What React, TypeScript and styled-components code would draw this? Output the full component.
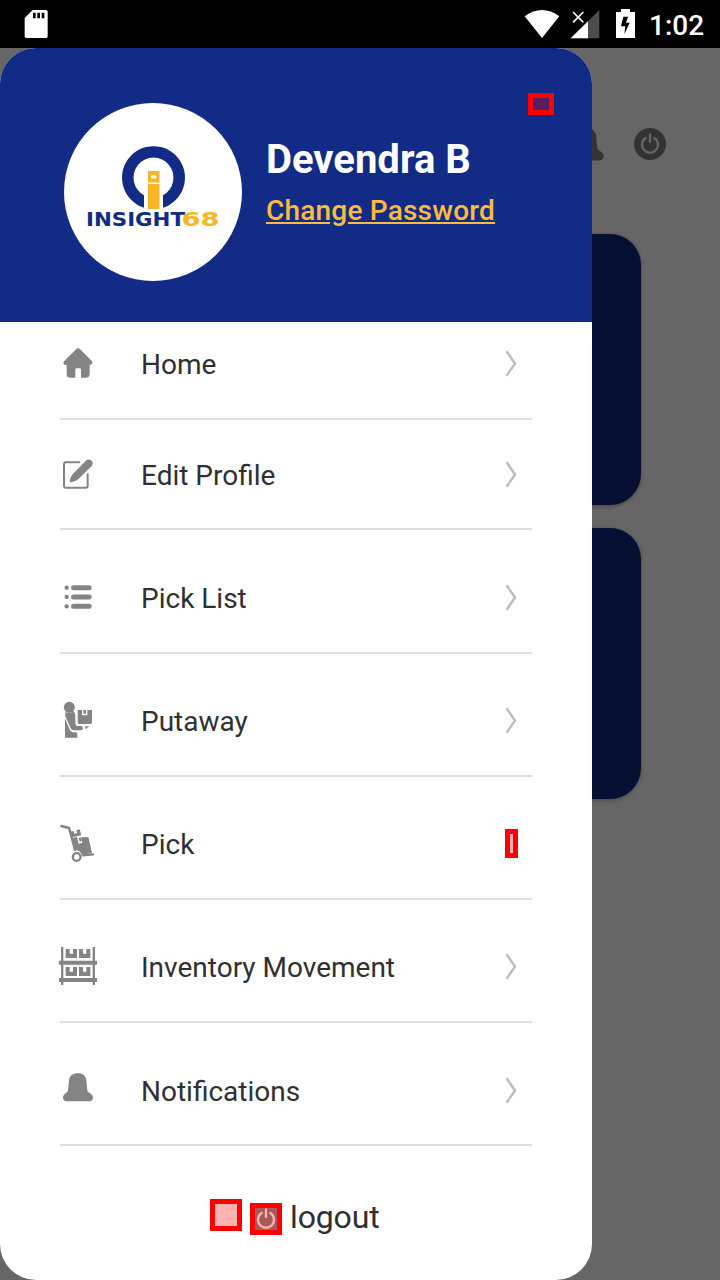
import React from "react";
import styled, { createGlobalStyle } from "styled-components";

const GlobalStyle = createGlobalStyle`
  * { box-sizing: border-box; }
  body { margin: 0; background: #666; font-family: Roboto, "Liberation Sans", sans-serif; }
  svg { display: block; flex: none; }
`;

const Screen = styled.div`
  position: relative;
  width: 720px;
  height: 1280px;
  overflow: hidden;
  display: flex;
  flex-direction: column;
  background: #666;
`;

const StatusBar = styled.div`
  height: 48px;
  flex: none;
  display: flex;
  align-items: center;
  padding: 0 16px 0 24px;
  background: #000;
`;

const StatusIcons = styled.div`
  display: flex;
  align-items: center;
  margin-left: auto;
`;

const Clock = styled.span`
  width: 55px;
  margin-left: 13px;
  padding-top: 3px;
  color: #fff;
  font-size: 28px;
  line-height: 32px;
  font-weight: 500;
  white-space: nowrap;
`;

const Stage = styled.div`
  flex: 1;
  display: grid;
  grid-template: 1232px / 720px;
`;

const Dashboard = styled.main`
  grid-area: 1 / 1;
  display: flex;
  flex-direction: column;
`;

const Toolbar = styled.div`
  display: flex;
  justify-content: flex-end;
  align-items: center;
  gap: 30px;
  height: 186px;
  padding: 6px 54px 0 0;
`;

const ToolbarBell = styled.svg`
  margin-top: 4px;
  fill: #333;
`;

const Cards = styled.div`
  display: flex;
  flex-direction: column;
  gap: 23px;
  padding: 0 79px;
`;

const Card = styled.div`
  height: 271px;
  border-radius: 31px;
  background: #061033;
  box-shadow: 0 1px 4px rgba(0, 0, 0, 0.3);
`;

const Drawer = styled.aside`
  grid-area: 1 / 1;
  z-index: 1;
  width: 592px;
  height: 1232px;
  border-radius: 36px;
  overflow: hidden;
  background: #fff;
`;

const Profile = styled.header`
  display: flex;
  align-items: center;
  gap: 24px;
  height: 274px;
  padding: 14px 0 0 64px;
  background: #122b86;
`;

const Avatar = styled.div`
  width: 178px;
  height: 178px;
  border-radius: 50%;
  overflow: hidden;
  background: #fff;
`;

const Identity = styled.div`
  display: flex;
  flex-direction: column;
  align-items: flex-start;
  padding-bottom: 20px;
`;

const UserName = styled.div`
  color: #fff;
  font-size: 40px;
  line-height: 48px;
  font-weight: 700;
  white-space: nowrap;
`;

const PasswordLink = styled.a`
  margin-top: 10px;
  color: #fbbc3d;
  font-size: 28px;
  line-height: 34px;
  font-weight: 500;
  letter-spacing: 0.2px;
  text-decoration: underline;
  white-space: nowrap;
`;

const Menu = styled.nav`
  padding: 0 60px;
`;

const MenuRow = styled.div<{ $height: number; $bottom: number }>`
  display: flex;
  align-items: flex-end;
  height: ${(p) => p.$height}px;
  padding: 0 14px ${(p) => p.$bottom}px 0;
  border-bottom: 2px solid #dfdfdf;
`;

const IconSlot = styled.span`
  width: 83px;
  margin-left: -2px;
  color: #848484;
`;

const Label = styled.span`
  flex: 1;
  padding-top: 1px;
  height: 40px;
  color: #303032;
  font-size: 28px;
  line-height: 40px;
  white-space: nowrap;
`;

const Logout = styled.div`
  display: flex;
  align-items: center;
  gap: 8px;
  height: 90px;
  padding: 56px 0 0 250px;
  color: #303032;
  font-size: 32px;
  line-height: 34px;
  letter-spacing: -0.15px;
`;

const LogoutText = styled.span`
  height: 38px;
`;

const Marker = styled.span<{ $x: number; $y: number; $w: number; $h: number }>`
  position: absolute;
  z-index: 2;
  left: ${(p) => p.$x}px;
  top: ${(p) => p.$y}px;
  width: ${(p) => p.$w}px;
  height: ${(p) => p.$h}px;
  border: 5px solid #f00;
  background: rgba(255, 0, 0, 0.3);
  background-clip: padding-box;
`;

const Glyph = ({ top, children }: { top: number; children: React.ReactNode }) => (
  <svg width="40" height="40" viewBox={`24 ${top} 120 120`} fill="currentColor">
    {children}
  </svg>
);

const BellPath = () => (
  <path d="M84 39 C68 39 59 46 57 60 L54 90 C53 98 39 101 39 112 Q39 123 54 123 H114 Q129 123 129 112 C129 101 113 98 112 90 L109 60 C107 46 99 39 84 39Z" />
);

const HomeIcon = () => (
  <Glyph top={42}>
    <path d="M84 55 Q88 55 92 59 L126 94 Q129 98 126 102 Q123 105 119 104 V132 Q119 143 108 143 H93 V119 Q93 115 89 115 H80 Q76 115 76 119 V143 H60 Q50 143 50 132 V104 Q44 106 41 102 Q39 98 42 94 L77 59 Q80 55 84 55Z" />
  </Glyph>
);

const EditIcon = () => (
  <Glyph top={375}>
    <path
      d="M88 397 H48 Q42 397 42 403 V467 Q42 473 48 473 H107 Q113 473 113 467 V433"
      fill="none"
      stroke="currentColor"
      strokeWidth="6"
      strokeLinecap="round"
    />
    <path d="M59 457 C60 445 64 436 71 430 L107 393 Q114 386 122 390 Q132 397 126 407 L86 446 C78 453 70 456 59 457Z" />
  </Glyph>
);

const ListIcon = () => (
  <Glyph top={9}>
    {[38, 66, 94].map((y) => (
      <g key={y}>
        <circle cx="50" cy={y} r="6.5" />
        <rect x="63" y={y - 7.5} width="62" height="15" rx="7.5" />
      </g>
    ))}
  </Glyph>
);

const PutawayIcon = () => (
  <Glyph top={378}>
    <circle cx="58" cy="397" r="16.5" />
    <path d="M46 411 Q60 417 71 409 L76 419 V446 L80 453 H94 Q99 454 99 460 Q99 466 93 466 H69 Q65 466 62 460 L46 424Z" />
    <path d="M45 430 L57 459 Q62 471 69 472 H78 Q82 473 82 478 V488 H45Z" />
    <path d="M83 405 H96 V421 H112 V405 H126 V441 Q126 447 120 447 H87 Q83 447 83 442Z" />
    <path d="M100 405 H108 V416 H100Z M105 454 H118 L106 463Z" />
  </Glyph>
);

const PickIcon = () => (
  <Glyph top={27}>
    <path d="M34 33 L57 39 L75 105" fill="none" stroke="currentColor" strokeWidth="7" strokeLinecap="round" />
    <path d="M61 50 L71 48 L73 56 L81 54 L79 46 L89 43 L94 61 L66 67Z" />
    <path
      fillRule="evenodd"
      d="M67 69 L81 66 L86 86 L97 83 L93 67 L115 66 L126 114 L96 119 Q91 107 76 104Z"
    />
    <path d="M86 69 L93 68 L95 79 L89 80Z" />
    <path d="M98 121 L129 118" stroke="currentColor" strokeWidth="7" strokeLinecap="round" />
    <circle cx="80" cy="126" r="11.5" fill="none" stroke="currentColor" strokeWidth="7" />
  </Glyph>
);

const InventoryIcon = () => (
  <Glyph top={396}>
    <path d="M33 396 H40 V510 H33Z M128 396 H135 V510 H128Z M27 437 H141 V449 H27Z M27 489 H141 V501 H27Z" />
    {[402, 456].map((y) =>
      [47, 87].map((x) => (
        <path key={`${x}-${y}`} d={`M${x} ${y} h12 v14 h10 v-14 h12 v27 h-34Z`} />
      )),
    )}
  </Glyph>
);

const BellIcon = () => (
  <Glyph top={32}>
    <BellPath />
  </Glyph>
);

const PowerIcon = ({ disc, mark }: { disc: string; mark: string }) => (
  <svg width="32" height="32" viewBox="0 0 32 32" fill="none">
    <circle cx="16" cy="16" r="16" fill={disc} />
    <path d="M11.6 10 A8 8 0 1 0 20.4 10 M16 6.3 V14" stroke={mark} strokeWidth="2.3" strokeLinecap="round" />
  </svg>
);

const Chevron = () => (
  <svg width="14" height="40" viewBox="0 0 14 40" fill="none" stroke="#bdbdbd" strokeWidth="2.4">
    <path d="M2.6 7.3 L11 19.5 L2.6 31.7" />
  </svg>
);

const Logo = () => (
  <svg width="178" height="178" viewBox="64 103 178 178">
    <path
      d="M144 203 V195.2 A20 20 0 1 1 163 195.2 V207.7 A31.5 31.5 0 1 0 144 207.7Z"
      fill="#122b86"
    />
    <path d="M148 171 H159.5 V182.5 H148Z M148 184 H159.5 V209 H148Z" fill="#fab528" />
    <rect x="151" y="175" width="5.5" height="3.6" rx="1.6" fill="#fff" />
    <g fontFamily="'DejaVu Sans', Roboto, sans-serif" fontSize="18.6" fontWeight="700">
      <text x="86" y="225.6" textLength="99" lengthAdjust="spacingAndGlyphs" fill="#122b86">
        INSIGHT
      </text>
      <text x="181.5" y="225.6" textLength="38" lengthAdjust="spacingAndGlyphs" fill="#fab528">
        68
      </text>
    </g>
  </svg>
);

const items = [
  { label: "Home", Icon: HomeIcon, height: 98, bottom: 34 },
  { label: "Edit Profile", Icon: EditIcon, height: 110, bottom: 33 },
  { label: "Pick List", Icon: ListIcon, height: 124, bottom: 34 },
  { label: "Putaway", Icon: PutawayIcon, height: 123, bottom: 34 },
  { label: "Pick", Icon: PickIcon, height: 123, bottom: 34, plain: true },
  { label: "Inventory Movement", Icon: InventoryIcon, height: 123, bottom: 34 },
  { label: "Notifications", Icon: BellIcon, height: 123, bottom: 33 },
];

export default function App() {
  return (
    <Screen>
      <GlobalStyle />
      <StatusBar>
        <svg width="24" height="28" viewBox="72 30 72 84">
          <path d="M98 30 H138 Q143 30 143 35 V109 Q143 114 138 114 H79 Q74 114 74 109 V54Z" fill="#fff" />
          <path d="M99 38 h8 v17 h-8Z M112 38 h8 v17 h-8Z M125 38 h8 v17 h-8Z" fill="#000" />
        </svg>
        <StatusIcons>
          <svg width="112" height="30" viewBox="72 27 336 90" fill="#fff">
            <path d="M74 49 Q126 11 178 49 L126 114Z" />
            <path d="M298 30 V115 H212Z" fill="#4d4d4d" />
            <path d="M264 64 V115 H212Z" />
            <path d="M219 36 L250 67 M250 36 L219 67" stroke="#000" strokeWidth="12" />
            <path d="M219 36 L250 67 M250 36 L219 67" stroke="#fff" strokeWidth="5" />
            <path d="M363 27 H390 V36 H405 V114 H348 V36 H363Z" />
            <path d="M370 50 H384 L378 68 H389 L373 103 L376 79 H363Z" fill="#000" />
          </svg>
          <Clock>1:02</Clock>
        </StatusIcons>
      </StatusBar>
      <Stage>
        <Dashboard>
          <Toolbar>
            <ToolbarBell width="35" height="37" viewBox="39 39 90 96">
              <BellPath />
              <path d="M72 128 H96 Q92 134 84 134 Q76 134 72 128Z" />
            </ToolbarBell>
            <PowerIcon disc="#333" mark="#666" />
          </Toolbar>
          <Cards>
            <Card />
            <Card />
          </Cards>
        </Dashboard>
        <Drawer>
          <Profile>
            <Avatar>
              <Logo />
            </Avatar>
            <Identity>
              <UserName>Devendra B</UserName>
              <PasswordLink>Change Password</PasswordLink>
            </Identity>
          </Profile>
          <Menu>
            {items.map(({ label, Icon, height, bottom, plain }) => (
              <MenuRow key={label} $height={height} $bottom={bottom}>
                <IconSlot>
                  <Icon />
                </IconSlot>
                <Label>{label}</Label>
                {!plain && <Chevron />}
              </MenuRow>
            ))}
          </Menu>
          <Logout>
            <PowerIcon disc="#828282" mark="#fff" />
            <LogoutText>logout</LogoutText>
          </Logout>
        </Drawer>
      </Stage>
      <Marker $x={528} $y={93} $w={26} $h={22} />
      <Marker $x={505} $y={829} $w={13} $h={29} />
      <Marker $x={210} $y={1199} $w={32} $h={32} />
      <Marker $x={250} $y={1203} $w={32} $h={32} />
    </Screen>
  );
}
